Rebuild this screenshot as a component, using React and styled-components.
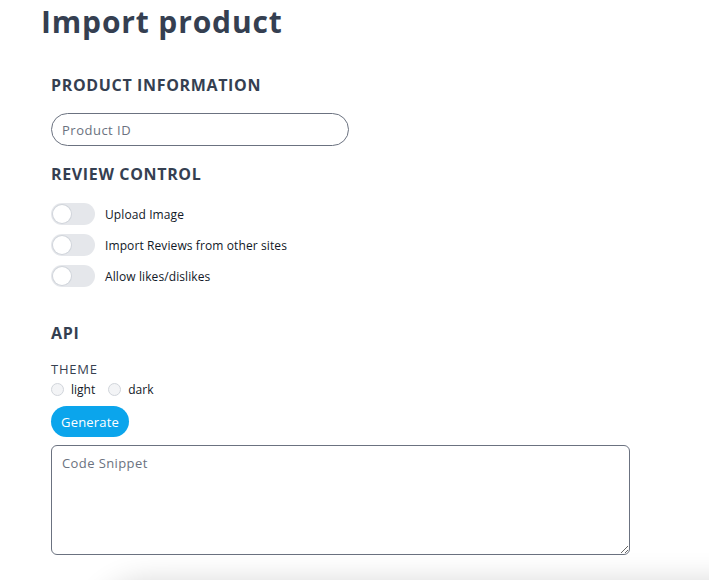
import React from "react"
import styled, { createGlobalStyle } from "styled-components"

const GlobalStyle = createGlobalStyle`
    html, body {
        margin: 0;
        padding: 0;
        background: #ffffff;
        overflow: hidden;
    }
    body {
        font-family: "Open Sans", "Liberation Sans", sans-serif;
        color: #111827;
    }
`

const Page = styled.main`
    width: 709px;
    height: 580px;
    position: relative;
    overflow: hidden;
    padding: 4px 0 0 41px;
    box-sizing: border-box;
`

const Title = styled.h1`
    margin: 0 0 33px;
    font-size: 30px;
    line-height: 36px;
    font-weight: 700;
    letter-spacing: 0.85px;
    color: #353f51;
`

const Form = styled.div`
    padding-left: 10px;
    display: flex;
    flex-direction: column;
`

const SectionTitle = styled.h2`
    margin: 0;
    font-size: 16px;
    line-height: 24px;
    font-weight: 700;
    letter-spacing: 0.65px;
    color: #353f51;
    text-transform: uppercase;
`

const TextInput = styled.input`
    width: 298px;
    height: 33px;
    box-sizing: border-box;
    border: 1px solid #6b7280;
    border-radius: 999px;
    padding: 0 10px;
    font-family: inherit;
    font-size: 13px;
    letter-spacing: 0.5px;
    margin: 16px 0 16px;
    outline: none;
    &::placeholder {
        color: #6b7280;
    }
`

const ToggleList = styled.div`
    display: flex;
    flex-direction: column;
    gap: 9px;
    margin: 17px 0 34px;
`

const ToggleRow = styled.label`
    display: flex;
    align-items: center;
    gap: 10px;
    font-size: 12px;
    font-weight: 500;
    letter-spacing: 0.1px;
    color: #111827;
`

const Track = styled.span`
    width: 44px;
    height: 22px;
    border-radius: 11px;
    background: ${p => (p.$on ? "#0ea5e9" : "#e5e7eb")};
    position: relative;
    flex-shrink: 0;
`

const Knob = styled.span`
    position: absolute;
    top: 2px;
    left: ${p => (p.$on ? "24px" : "2px")};
    width: 18px;
    height: 18px;
    border-radius: 50%;
    background: #ffffff;
    box-shadow: 0 0 0 1px #d1d5db;
`

const Label = styled.div`
    margin-top: 16px;
    font-size: 13px;
    line-height: 16px;
    letter-spacing: 0.8px;
    text-transform: uppercase;
    color: #374151;
`

const RadioGroup = styled.div`
    display: flex;
    align-items: center;
    gap: 13px;
    margin: 4px 0 8px;
`

const RadioOption = styled.label`
    display: flex;
    align-items: center;
    gap: 7px;
    font-size: 12px;
    color: #111827;
`

const RadioDot = styled.span`
    width: 11px;
    height: 11px;
    border-radius: 50%;
    border: 1px solid #d1d5db;
    background: #f3f4f6;
`

const Button = styled.button`
    align-self: flex-start;
    height: 31px;
    padding: 0 10px;
    border: none;
    border-radius: 999px;
    background: #0ba5ec;
    color: #ffffff;
    font-family: inherit;
    font-size: 13px;
    letter-spacing: 0.2px;
`

const CodeArea = styled.textarea`
    margin-top: 8px;
    width: 579px;
    height: 110px;
    box-sizing: border-box;
    border: 1px solid #6b7280;
    border-radius: 6px;
    padding: 8px 10px;
    font-family: inherit;
    font-size: 13px;
    letter-spacing: 0.4px;
    outline: none;
    &::placeholder {
        color: #6b7280;
    }
`

const Footer = styled.div`
    position: absolute;
    left: 90px;
    right: -40px;
    top: 583px;
    height: 60px;
    border-radius: 70px 0 0 0;
    background: #ebebeb;
    box-shadow: 0 -2px 30px rgba(0, 0, 0, 0.16);
`

function Toggle({ label, on }) {
    return (
        <ToggleRow>
            <Track $on={on}><Knob $on={on} /></Track>
            {label}
        </ToggleRow>
    )
}

export default function App() {
    return (
        <>
            <GlobalStyle />
            <Page>
                <Title>Import product</Title>
                <Form>
                    <SectionTitle>Product Information</SectionTitle>
                    <TextInput placeholder="Product ID" />
                    <SectionTitle>Review Control</SectionTitle>
                    <ToggleList>
                        <Toggle label="Upload Image" />
                        <Toggle label="Import Reviews from other sites" />
                        <Toggle label="Allow likes/dislikes" />
                    </ToggleList>
                    <SectionTitle>API</SectionTitle>
                    <Label>Theme</Label>
                    <RadioGroup>
                        <RadioOption><RadioDot />light</RadioOption>
                        <RadioOption><RadioDot />dark</RadioOption>
                    </RadioGroup>
                    <Button>Generate</Button>
                    <CodeArea placeholder="Code Snippet" />
                </Form>
                <Footer />
            </Page>
        </>
    )
}
